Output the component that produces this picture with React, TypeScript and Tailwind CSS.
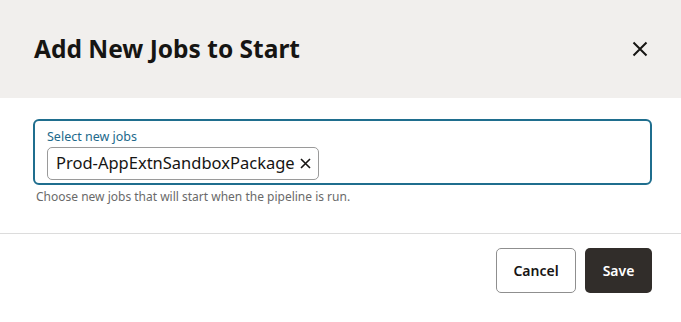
import React from "react";

export default function App() {
  return (
    <div className="w-[681px] h-[322px] bg-white overflow-hidden" style={{ fontFamily: '"Noto Sans", "Liberation Sans", sans-serif' }}>
      <div className="h-[98px] bg-[#f1efed] flex items-center justify-between pl-[34px] pr-[33px]">
        <h1 className="text-[24.5px] font-bold text-[#161513] leading-none">Add New Jobs to Start</h1>
        <button className="w-[16px] h-[16px] flex items-center justify-center">
          <svg width="16" height="16" viewBox="0 0 16 16" fill="none">
            <path d="M1.5 1.5 L14.5 14.5 M14.5 1.5 L1.5 14.5" stroke="#161513" strokeWidth="2" />
          </svg>
        </button>
      </div>
      <div className="pt-[21px] pl-[33px] pr-[29px] h-[136px] border-b border-[#dcdcdc]">
        <div className="h-[66px] border-2 border-[#1f6e8e] rounded-[6px] pl-[12px] pt-[8px]">
          <div className="text-[12.5px] leading-[15px] text-[#22698b]">Select new jobs</div>
          <div className="mt-[3px] inline-flex items-center h-[33px] border border-[#9a9a9a] rounded-[5px] pl-[8px] pr-[7px] gap-[5px]">
            <span className="text-[16.5px] text-[#161513] leading-none">Prod-AppExtnSandboxPackage</span>
            <svg width="11" height="11" viewBox="0 0 11 11" fill="none">
              <path d="M1 1 L10 10 M10 1 L1 10" stroke="#161513" strokeWidth="1.6" />
            </svg>
          </div>
        </div>
        <div className="mt-[4px] ml-[3px] text-[12px] leading-[15px] text-[#6a6a6a]">Choose new jobs that will start when the pipeline is run.</div>
      </div>
      <div className="flex justify-end gap-[9px] pt-[14px] pr-[29px]">
        <button className="w-[80px] h-[45px] border border-[#8f8f8f] rounded-[5px] bg-white text-[14px] font-semibold text-[#161513]">Cancel</button>
        <button className="w-[67px] h-[45px] rounded-[5px] bg-[#312d2a] text-[14px] font-semibold text-white">Save</button>
      </div>
    </div>
  );
}
